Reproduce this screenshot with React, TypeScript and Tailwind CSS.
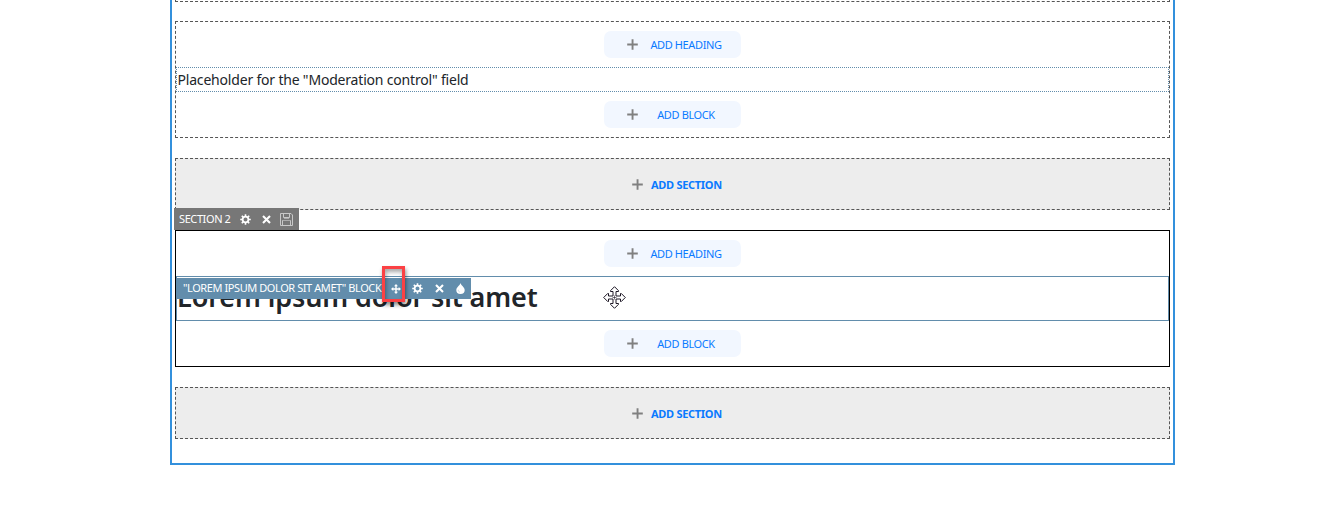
import type { ReactNode } from "react";

function Plus() {
  return (
    <svg className="h-[11px] w-[11px] shrink-0" viewBox="0 0 11 11" fill="#808080">
      <path d="M4.6 0.2h1.9v4.3h4.3v1.9H6.5v4.3H4.6V6.4H0.2V4.5h4.4z" />
    </svg>
  );
}

function Gear() {
  return (
    <svg className="h-[11px] w-[11px] shrink-0" viewBox="0 0 11 11">
      <circle cx="5.5" cy="5.5" r="2.9" fill="none" stroke="#fff" strokeWidth="1.8" />
      <path
        d="M5.5 0.2v2M5.5 8.8v2M0.2 5.5h2M8.8 5.5h2M1.8 1.8l1.3 1.3M7.9 7.9l1.3 1.3M1.8 9.2l1.3-1.3M7.9 3.1l1.3-1.3"
        stroke="#fff"
        strokeWidth="1.6"
      />
    </svg>
  );
}

function Cross() {
  return (
    <svg className="h-[9px] w-[9px] shrink-0" viewBox="0 0 9 9">
      <path d="M1 1l7 7M8 1l-7 7" stroke="#fff" strokeWidth="2.1" />
    </svg>
  );
}

function Disk() {
  return (
    <svg className="h-[13px] w-[13px] shrink-0" viewBox="0 0 13 13" fill="none" stroke="#c8c8c8">
      <path d="M0.5 0.5h10.5l1.5 1.5v10.5H0.5z" />
      <path d="M3.5 0.5v4h6v-4M2.5 12.5V7.5h8v5" />
      <path d="M4 5.5h5M3 7.5h7" stroke="#aaa" />
    </svg>
  );
}

function MoveIcon() {
  return (
    <svg className="h-[10px] w-[10px] shrink-0" viewBox="0 0 10 10" fill="#fff">
      <path d="M5 0l2 2.3H5.7v2h2V3L10 5 7.7 7V5.7h-2v2H7L5 10 3 7.7h1.3v-2h-2V7L0 5l2.3-2v1.3h2v-2H3z" />
    </svg>
  );
}

function Drop() {
  return (
    <svg className="h-[11px] w-[9px] shrink-0" viewBox="0 0 9 11">
      <path d="M4.5 0C4.9 2.4 8.7 4.2 8.7 7a4.2 4 0 0 1-8.4 0C.3 4.2 4.1 2.4 4.5 0z" fill="#fff" />
      <path d="M2.3 6.8c-.2 1.1.4 2 1.6 2.2" stroke="#b9cddb" strokeWidth=".8" fill="none" />
    </svg>
  );
}

function MoveCursor() {
  return (
    <svg className="absolute top-[9px] left-[426px] h-[23px] w-[23px]" viewBox="0 0 23 23">
      <path
        d="M11.5 .7L15.5 4.7V5.5H13V10H17.5V7.5H18.3L22.3 11.5L18.3 15.5H17.5V13H13V17.5H15.5V18.3L11.5 22.3L7.5 18.3V17.5H10V13H5.5V15.5H4.7L.7 11.5L4.7 7.5H5.5V10H10V5.5H7.5V4.7Z"
        fill="#fff"
        stroke="#1c1624"
        strokeWidth="1"
      />
      <path d="M11.5 9.5v4M9.5 11.5h4" stroke="#1c1624" strokeWidth=".6" />
    </svg>
  );
}

function AddButton({ children, className }: { children: ReactNode; className: string }) {
  return (
    <button
      className={`mx-auto flex h-[27px] w-[137px] items-center rounded-[7px] bg-[#f2f7ff] pl-[23px] text-[#0a7aff] ${className}`}
    >
      <Plus />
      <span className="flex-1 pr-[7px] text-center text-[11px] leading-none tracking-[-0.38px] whitespace-nowrap">
        {children}
      </span>
    </button>
  );
}

function AddSection() {
  return (
    <div className="flex h-[52px] items-center border border-dashed border-[#555] bg-[#ededed] pl-[456px] text-[#0a7aff]">
      <Plus />
      <span className="ml-[8px] text-[11px] leading-none font-bold tracking-[-0.3px] whitespace-nowrap">
        ADD SECTION
      </span>
    </div>
  );
}

export default function App() {
  return (
    <main className="flex h-[514px] w-[1334px] items-start overflow-hidden bg-white pl-[170px] font-['Noto_Sans','Open_Sans',sans-serif]">
      <div className="flex h-[465px] w-[1005px] flex-col border-2 border-t-0 border-[#3390dc] px-[3px]">
        <div className="h-[2px] border border-t-0 border-dashed border-[#555]" />

        <section className="mt-[19px] h-[117px] border border-dashed border-[#555]">
          <AddButton className="mt-[9px]">ADD HEADING</AddButton>
          <div className="mt-[9px] flex h-[25px] items-center border border-dotted border-[#628dac] text-[14px] leading-none text-[#212529]">
            <span className="pl-[0.5px] tracking-[-0.19px] whitespace-nowrap">
              Placeholder for the "Moderation control" field
            </span>
          </div>
          <AddButton className="mt-[9px]">ADD BLOCK</AddButton>
        </section>

        <div className="mt-[20px]">
          <AddSection />
        </div>

        <section className="relative mt-[20px] h-[137px] border border-black">
          <div className="absolute -top-[23px] -left-[2px] flex h-[22px] w-[125px] items-center bg-[#777] pl-[5px] text-[11px] leading-none text-white">
            <span className="w-[61px] pb-px tracking-[-0.4px] whitespace-nowrap">SECTION 2</span>
            <Gear />
            <span className="ml-[11px] flex">
              <Cross />
            </span>
            <span className="ml-[9px] flex">
              <Disk />
            </span>
          </div>
          <AddButton className="mt-[9px]">ADD HEADING</AddButton>
          <div className="relative mt-[9px] flex h-[45px] items-center border border-[#628dac]">
            <h2 className="pb-[4px] text-[27px] leading-none font-semibold tracking-[-0.11px] whitespace-nowrap text-[#212529]">
              Lorem ipsum dolor sit amet
            </h2>
            <div className="absolute top-[1px] -left-px flex h-[21px] w-[295px] items-center bg-[#628dac] pl-[7px] text-[11px] leading-none text-white">
              <span className="w-[208px] pb-[2px] tracking-[-0.42px] whitespace-nowrap">
                "LOREM IPSUM DOLOR SIT AMET" BLOCK
              </span>
              <MoveIcon />
              <span className="ml-[11px] flex">
                <Gear />
              </span>
              <span className="ml-[12px] flex">
                <Cross />
              </span>
              <span className="ml-[12px] flex">
                <Drop />
              </span>
            </div>
            <div className="absolute -top-[11px] left-[205px] h-[36px] w-[23px] border-3 border-[#fb4144] shadow-[1px_3px_4px_rgba(0,0,0,0.45),inset_1px_3px_4px_rgba(0,0,0,0.35)]" />
            <MoveCursor />
          </div>
          <AddButton className="mt-[9px]">ADD BLOCK</AddButton>
        </section>

        <div className="mt-[20px]">
          <AddSection />
        </div>
      </div>
    </main>
  );
}
